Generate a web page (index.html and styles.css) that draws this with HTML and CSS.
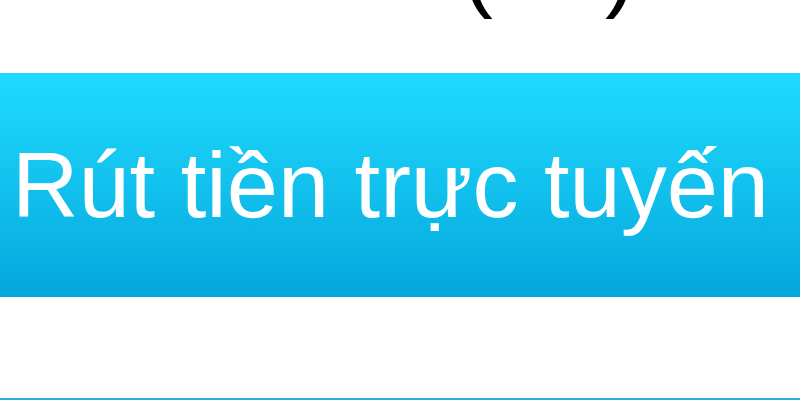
FILE: index.html
```html
<!DOCTYPE html>
<html lang="vi">
<head>
    <meta charset="UTF-8">
    <title>Rút tiền trực tuyến</title>
    <link rel="stylesheet" href="styles.css">
</head>
<body>
    <div class="amount">
        <span>(</span>
        <span>)</span>
    </div>
    <button type="button" class="withdraw">Rút tiền trực tuyến</button>
    <div class="next-box"></div>
</body>
</html>
```

FILE: styles.css
```css
body {
    margin: 0;
    background-color: #fff;
    font-family: "Liberation Sans", Arial, sans-serif;
}

.amount {
    display: flex;
    justify-content: center;
    align-items: flex-end;
    gap: 112px;
    height: 20px;
    margin-bottom: 53px;
    padding-left: 298px;
    font-size: 92px;
    line-height: 104px;
    color: #000;
}

.withdraw {
    display: block;
    width: 100%;
    height: 224px;
    padding: 0 12px;
    border: none;
    background: linear-gradient(#20dbff, #04a7dc);
    color: #fff;
    font-family: inherit;
    font-size: 92px;
    text-align: left;
    white-space: nowrap;
    cursor: pointer;
}

.next-box {
    margin-top: 101px;
    border-top: 2px solid #30acd8;
}
```
